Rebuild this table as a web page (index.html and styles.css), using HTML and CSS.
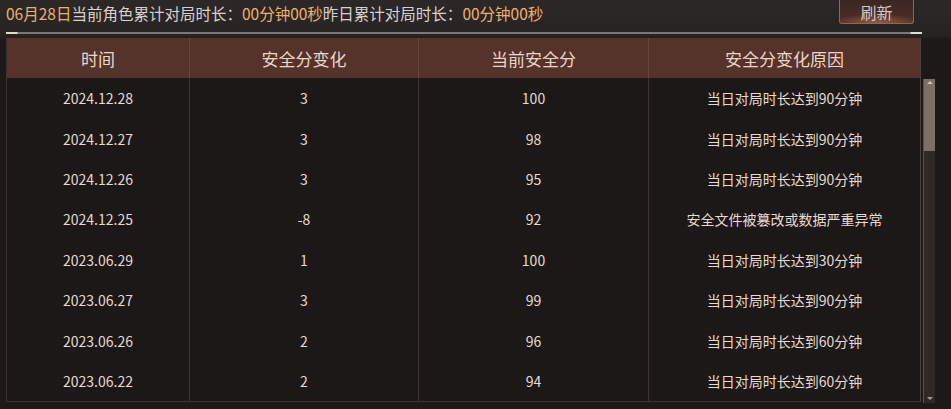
FILE: index.html
```html
<!DOCTYPE html>
<html lang="zh">
<head>
<meta charset="utf-8">
<link rel="stylesheet" href="styles.css">
</head>
<body>
<div class="page">
  <div class="top">
    <div class="title"><span class="hl">06月28日</span>当前角色累计对局时长：<span class="hl">00分钟00秒</span>昨日累计对局时长：<span class="hl">00分钟00秒</span></div>
    <button class="btn">刷新</button>
  </div>
  <div class="rule"></div>
  <div class="panel">
    <div class="table">
      <div class="row head">
        <div class="c">时间</div><div class="c">安全分变化</div><div class="c">当前安全分</div><div class="c">安全分变化原因</div>
      </div>
      <div class="row"><div class="c">2024.12.28</div><div class="c">3</div><div class="c">100</div><div class="c">当日对局时长达到90分钟</div></div>
      <div class="row"><div class="c">2024.12.27</div><div class="c">3</div><div class="c">98</div><div class="c">当日对局时长达到90分钟</div></div>
      <div class="row"><div class="c">2024.12.26</div><div class="c">3</div><div class="c">95</div><div class="c">当日对局时长达到90分钟</div></div>
      <div class="row"><div class="c">2024.12.25</div><div class="c">-8</div><div class="c">92</div><div class="c">安全文件被篡改或数据严重异常</div></div>
      <div class="row"><div class="c">2023.06.29</div><div class="c">1</div><div class="c">100</div><div class="c">当日对局时长达到30分钟</div></div>
      <div class="row"><div class="c">2023.06.27</div><div class="c">3</div><div class="c">99</div><div class="c">当日对局时长达到90分钟</div></div>
      <div class="row"><div class="c">2023.06.26</div><div class="c">2</div><div class="c">96</div><div class="c">当日对局时长达到60分钟</div></div>
      <div class="row"><div class="c">2023.06.22</div><div class="c">2</div><div class="c">94</div><div class="c">当日对局时长达到60分钟</div></div>
    </div>
    <div class="scroll">
      <div class="arrow up"></div>
      <div class="thumb"></div>
      <div class="arrow down"></div>
    </div>
  </div>
</div>
</body>
</html>
```

FILE: styles.css
```css
html, body {
  margin: 0;
  padding: 0;
  background: #1d1918;
  font-family: "Noto Sans CJK SC", "Noto Sans", sans-serif;
}
.page {
  width: 951px;
  height: 409px;
  overflow: hidden;
  background: linear-gradient(180deg, #2c2827 0px, #272322 36px, #1d1918 40px);
}
.top {
  height: 32px;
  display: flex;
  align-items: flex-start;
  justify-content: space-between;
  padding: 0 37px 0 6px;
}
.title {
  font-size: 15.5px;
  line-height: 27px;
  color: #d9d2cc;
  white-space: nowrap;
}
.hl { color: #efb06c; }
.btn {
  width: 75px;
  height: 24px;
  margin: 0;
  padding: 0;
  border: 1px solid #8d6757;
  border-top: none;
  border-radius: 0 0 3px 3px;
  background: radial-gradient(ellipse 60% 40% at 50% 100%, #9a5a44 0%, rgba(120,70,55,0) 100%), linear-gradient(180deg, #3c2622, #4e2e27);
  color: #d2cbc7;
  font-family: "Noto Sans CJK SC", sans-serif;
  font-size: 16px;
  line-height: 22px;
}
.rule {
  margin-left: 6px;
  width: 916px;
  height: 2px;
  background: linear-gradient(90deg, #e8d8c4 0px, #e8d8c4 11px, #7b7774 12px, #7b7774 904px, #e8dccb 905px, #e8dccb 916px);
}
.panel {
  margin-top: 4px;
  margin-left: 6px;
  display: flex;
  align-items: flex-start;
  gap: 2px;
}
.table {
  width: 913px;
  border-left: 1px solid #3b3331;
  border-right: 1px solid #4a403c;
  border-bottom: 1px solid #3e3533;
  background: #1c1817;
}
.row {
  display: grid;
  grid-template-columns: 182px 229px 230px 1fr;
  height: 40.4px;
}
.row .c {
  display: flex;
  align-items: center;
  justify-content: center;
  color: #e6dad2;
  font-size: 14px;
  border-left: 1px solid #3c3230;
}
.row .c:first-child { border-left: none; }
.head {
  height: 40px;
  background: #55322a;
}
.head .c {
  font-size: 17px;
  color: #ecd6c8;
  border-left: 1px solid #6a4537;
}
.scroll {
  margin-top: 41px;
  width: 11px;
  height: 324px;
  background: #2f2825;
  border-left: 1px solid #5d514b;
  display: flex;
  flex-direction: column;
}
.arrow {
  height: 8px;
  background: #7d6e66;
  position: relative;
}
.arrow.down { margin-top: auto; background: #2f2825; }
.arrow::after {
  content: "";
  position: absolute;
  left: 3px;
  top: 2px;
  border-left: 3px solid transparent;
  border-right: 3px solid transparent;
}
.arrow.up::after { border-bottom: 3px solid #d0c4bc; }
.arrow.down::after { border-top: 3px solid #a8988e; }
.thumb {
  height: 64px;
  background: #7d6e66;
}
```
